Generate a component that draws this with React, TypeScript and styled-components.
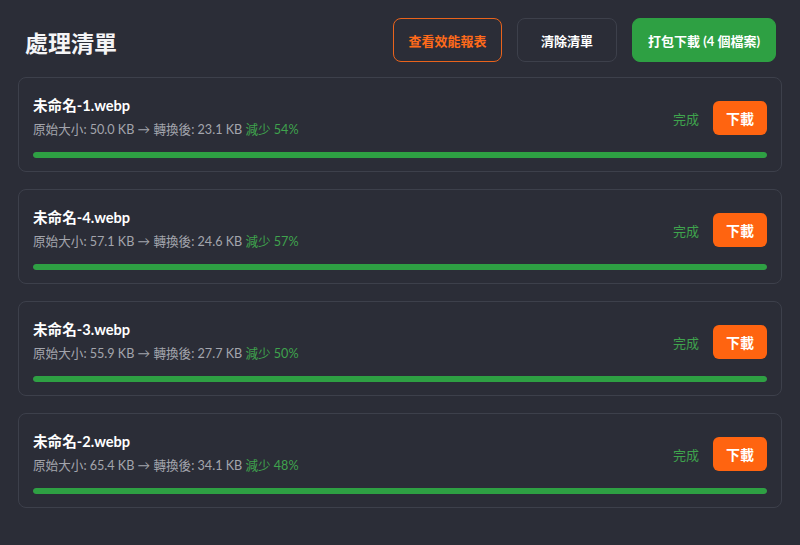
import React from "react";
import styled, { createGlobalStyle } from "styled-components";

const Global = createGlobalStyle`
  html, body { margin: 0; padding: 0; background: #2b2d37; }
  body { font-family: Lato, "Noto Sans CJK TC", sans-serif; color: #fff; }
  * { box-sizing: border-box; }
`;

const Page = styled.div`
  width: 800px;
  min-height: 545px;
  padding: 18px 18px 0 18px;
  display: flex;
  flex-direction: column;
  gap: 15px;
`;

const Header = styled.div`
  display: flex;
  align-items: center;
  justify-content: space-between;
  padding: 0 6px 0 7px;
  height: 44px;
`;

const Title = styled.h1`
  margin: 0;
  margin-top: 3px;
  font-size: 23px;
  font-weight: 700;
  color: #f4f4f6;
  font-family: "Noto Sans CJK TC", sans-serif;
`;

const Actions = styled.div`
  display: flex;
  gap: 15px;
`;

const HeaderButton = styled.button<{ $variant: "outline" | "ghost" | "primary"; $w: number }>`
  height: 44px;
  width: ${(p) => p.$w}px;
  border-radius: 8px;
  font-family: Lato, "Noto Sans CJK TC", sans-serif;
  font-size: 13px;
  font-weight: 700;
  display: flex;
  align-items: center;
  justify-content: center;
  padding: 0;
  cursor: pointer;
  background: ${(p) => (p.$variant === "primary" ? "#2ea043" : "transparent")};
  color: ${(p) => (p.$variant === "outline" ? "#ff6a1a" : "#ffffff")};
  border: 1px solid
    ${(p) =>
      p.$variant === "outline" ? "#e9631c" : p.$variant === "ghost" ? "#3d404b" : "#2ea043"};
`;

const List = styled.div`
  display: flex;
  flex-direction: column;
  gap: 17px;
`;

const Card = styled.div`
  border: 1px solid #3d404b;
  border-radius: 8px;
  padding: 18px 14px 13px 14px;
  display: flex;
  flex-direction: column;
  gap: 12px;
`;

const Row = styled.div`
  display: flex;
  align-items: center;
  justify-content: space-between;
`;

const Info = styled.div`
  display: flex;
  flex-direction: column;
  gap: 4px;
`;

const FileName = styled.div`
  font-size: 14.6px;
  line-height: 20px;
  font-weight: 700;
  color: #ffffff;
`;

const Details = styled.div`
  font-size: 12.6px;
  line-height: 20px;
  color: #a3a5ad;
`;

const Saved = styled.span`
  color: #3fa34d;
`;

const Right = styled.div`
  display: flex;
  align-items: center;
  gap: 14px;
`;

const Status = styled.span`
  font-size: 13px;
  color: #3fa34d;
`;

const DownloadButton = styled.button`
  height: 34px;
  width: 54px;
  border: none;
  border-radius: 6px;
  background: #ff6410;
  color: #fff;
  font-family: "Noto Sans CJK TC", sans-serif;
  font-size: 14px;
  font-weight: 700;
  cursor: pointer;
  padding: 0;
`;

const Track = styled.div`
  height: 6px;
  border-radius: 3px;
  background: #3d404b;
  overflow: hidden;
`;

const Fill = styled.div`
  height: 100%;
  border-radius: 3px;
  background: #2ea043;
`;

const files = [
  { name: "未命名-1.webp", orig: "50.0", out: "23.1", pct: 54 },
  { name: "未命名-4.webp", orig: "57.1", out: "24.6", pct: 57 },
  { name: "未命名-3.webp", orig: "55.9", out: "27.7", pct: 50 },
  { name: "未命名-2.webp", orig: "65.4", out: "34.1", pct: 48 },
];

export default function App() {
  return (
    <>
      <Global />
      <Page>
        <Header>
          <Title>處理清單</Title>
          <Actions>
            <HeaderButton $variant="outline" $w={109}>查看效能報表</HeaderButton>
            <HeaderButton $variant="ghost" $w={100}>清除清單</HeaderButton>
            <HeaderButton $variant="primary" $w={144}>打包下載 (4 個檔案)</HeaderButton>
          </Actions>
        </Header>
        <List>
          {files.map((f) => (
            <Card key={f.name}>
              <Row>
                <Info>
                  <FileName>{f.name}</FileName>
                  <Details>
                    原始大小: {f.orig} KB → 轉換後: {f.out} KB <Saved>減少 {f.pct}%</Saved>
                  </Details>
                </Info>
                <Right>
                  <Status>完成</Status>
                  <DownloadButton>下載</DownloadButton>
                </Right>
              </Row>
              <Track>
                <Fill style={{ width: "100%" }} />
              </Track>
            </Card>
          ))}
        </List>
      </Page>
    </>
  );
}
